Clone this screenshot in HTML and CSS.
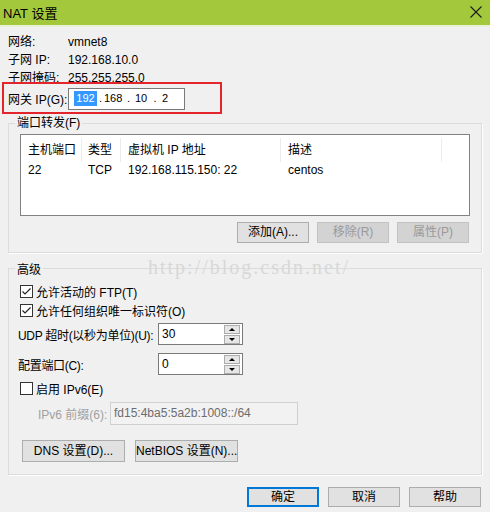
FILE: index.html
```html
<!DOCTYPE html>
<html lang="zh-CN">
<head>
<meta charset="utf-8">
<title>NAT 设置</title>
<link rel="stylesheet" href="styles.css">
</head>
<body>
<div class="titlebar">
  <span class="title">NAT 设置</span>
  <svg class="close" width="12" height="12" viewBox="0 0 12 12"><path d="M0.5 0.5L11.5 11.5M11.5 0.5L0.5 11.5" stroke="#1a1a1a" stroke-width="1.1" fill="none"/></svg>
</div>
<div class="content">
  <div class="info-row"><span class="lbl">网络:</span><span>vmnet8</span></div>
  <div class="info-row"><span class="lbl">子网 IP:</span><span>192.168.10.0</span></div>
  <div class="info-row"><span class="lbl">子网掩码:</span><span>255.255.255.0</span></div>

  <div class="gateway">
    <span class="lbl">网关 IP(G):</span>
    <div class="ipbox">
      <span class="seg s1 sel">192</span><span class="dot d1">.</span><span class="seg s2">168</span><span class="dot d2">.</span><span class="seg s3">10</span><span class="dot d3">.</span><span class="seg s4">2</span>
    </div>
  </div>

  <fieldset class="group g1">
    <legend>端口转发(F)</legend>
    <div class="listbox">
      <div class="lrow head">
        <span class="c1">主机端口</span><span class="c2">类型</span><span class="c3">虚拟机 IP 地址</span><span class="c4">描述</span>
      </div>
      <div class="lrow data">
        <span class="c1">22</span><span class="c2">TCP</span><span class="c3">192.168.115.150: 22</span><span class="c4">centos</span>
      </div>
    </div>
    <div class="btnrow">
      <button class="btn">添加(A)...</button>
      <button class="btn disabled">移除(R)</button>
      <button class="btn disabled">属性(P)</button>
    </div>
  </fieldset>

  <fieldset class="group g2">
    <legend>高级</legend>
    <div class="cbrow r1"><span class="cb"><svg width="11" height="11" viewBox="0 0 11 11"><path d="M1.5 5.5L4 8L9.5 2.5" stroke="#222" stroke-width="1.2" fill="none"/></svg></span>允许活动的 FTP(T)</div>
    <div class="cbrow"><span class="cb"><svg width="11" height="11" viewBox="0 0 11 11"><path d="M1.5 5.5L4 8L9.5 2.5" stroke="#222" stroke-width="1.2" fill="none"/></svg></span>允许任何组织唯一标识符(O)</div>
    <div class="frow udp">
      <span class="flbl">UDP 超时(以秒为单位)(U):</span>
      <div class="spin"><span class="sval">30</span><span class="sbtns"><span class="sb"><i class="up"></i></span><span class="sb"><i class="down"></i></span></span></div>
    </div>
    <div class="frow cfg">
      <span class="flbl">配置端口(C):</span>
      <div class="spin"><span class="sval">0</span><span class="sbtns"><span class="sb"><i class="up"></i></span><span class="sb"><i class="down"></i></span></span></div>
    </div>
    <div class="cbrow r3"><span class="cb"></span>启用 IPv6(E)</div>
    <div class="prow">
      <span class="plbl">IPv6 前缀(6):</span>
      <div class="pbox">fd15:4ba5:5a2b:1008::/64</div>
    </div>
    <div class="drow">
      <button class="btn dns">DNS 设置(D)...</button>
      <button class="btn nb">NetBIOS 设置(N)...</button>
    </div>
  </fieldset>

  <div class="footer">
    <button class="btn ok">确定</button>
    <button class="btn">取消</button>
    <button class="btn">帮助</button>
  </div>
</div>
<div class="watermark">http://blog.csdn.net/</div>
</body>
</html>
```
FILE: styles.css
```css
* { box-sizing: border-box; }
html, body { margin: 0; padding: 0; }
body {
  width: 490px;
  height: 512px;
  background: #f0f0f0;
  font-family: "Liberation Sans", "Noto Sans CJK SC", sans-serif;
  font-size: 12px;
  color: #000;
  position: relative;
  overflow: hidden;
}
.titlebar {
  height: 27px;
  background: #a4c83c;
  border-bottom: 2px solid #eaf1d4;
  display: flex;
  align-items: center;
  justify-content: space-between;
  padding: 0 8px 1px 3px;
}
.title { font-size: 13px; }
.close { display: block; }

.content { padding: 6px 8px 0 8px; }
.info-row { height: 18px; line-height: 18px; display: flex; }
.lbl { width: 60px; flex: none; white-space: nowrap; }

.gateway {
  margin: -5px 0 0 -6px;
  width: 220px;
  height: 32px;
  border: 2px solid #e3242b;
  display: flex;
  align-items: center;
  padding: 1px 0 0 4px;
  position: relative;
}
.ipbox {
  width: 117px;
  height: 22px;
  border: 1px solid #7a7a7a;
  background: #fff;
  display: flex;
  align-items: center;
  font-size: 11px;
}
.seg, .dot { display: inline-block; height: 15px; line-height: 15px; }
.s1 { margin-left: 5px; width: 23px; text-align: center; }
.sel { background: #3399ff; color: #fff; }
.d1 { width: 7px; text-align: center; }
.s2 { width: 22px; }
.d2 { width: 5px; text-align: center; }
.s3 { width: 21px; padding-left: 4px; }
.d3 { width: 6px; text-align: center; }
.s4 { padding-left: 4px; }

.group {
  margin: 2px 0 0 0;
  border: 1px solid #dcdcdc;
  box-shadow: 1px 1px 0 #fff;
  padding: 0 11px 9px 11px;
  min-width: 0;
}
.group legend {
  padding: 0 2px;
  margin-left: -5px;
  line-height: 14px;
  font-size: 12px;
}
.g2 { margin-top: 6px; padding-bottom: 12px; }
.g2 legend { padding-top: 4px; }

.listbox {
  margin-top: 4px;
  height: 82px;
  border: 1px solid #828282;
  background: #fff;
}
.lrow { display: flex; }
.lrow span { padding-left: 7px; white-space: nowrap; }
.head { margin-top: 3px; height: 24px; line-height: 24px; }
.head span { border-right: 1px solid #ececec; }
.data { height: 16px; line-height: 16px; }
.c1 { width: 61px; }
.c2 { width: 39px; padding-left: 6px !important; }
.c3 { width: 160px; }
.c4 { width: 161px; }

.btnrow {
  margin-top: 6px;
  display: flex;
  justify-content: flex-end;
  gap: 8px;
  padding-right: 1px;
}
.btn {
  font-family: "Liberation Sans", "Noto Sans CJK SC", sans-serif;
  font-size: 12px;
  color: #000;
  background: #e1e1e1;
  border: 1px solid #adadad;
  width: 72px;
  height: 21px;
  padding: 0;
  margin: 0;
  line-height: 19px;
  white-space: nowrap;
}
.btn.disabled { background: #d3d3d3; border-color: #c2c2c2; color: #9a9a9a; }

.cbrow { height: 19px; display: flex; align-items: center; white-space: nowrap; }
.r1 { margin-top: 5px; }
.r3 { margin-top: 4px; }
.cb {
  width: 13px;
  height: 13px;
  border: 1px solid #333;
  background: #fff;
  margin-right: 3px;
  display: flex;
  align-items: center;
  justify-content: center;
  flex: none;
}
.cb svg { display: block; }

.frow { height: 22px; display: flex; align-items: center; }
.udp { margin-top: 3px; }
.cfg { margin-top: 8px; }
.flbl { width: 140px; margin-left: -2px; flex: none; white-space: nowrap; letter-spacing: -0.3px; }
.spin {
  width: 85px;
  height: 22px;
  border: 1px solid #7a7a7a;
  background: #fff;
  display: flex;
  align-items: center;
  padding: 0 1px 0 3px;
}
.sval { flex: 1; }
.sbtns { display: flex; flex-direction: column; gap: 1px; margin-right: 1px; }
.sb {
  width: 16px;
  height: 9px;
  border: 1px solid #acacac;
  background: #e6e6e6;
  display: flex;
  align-items: center;
  justify-content: center;
}
.sb i { width: 0; height: 0; border-left: 3px solid transparent; border-right: 3px solid transparent; }
.sb .up { border-bottom: 3px solid #000; }
.sb .down { border-top: 3px solid #000; }

.prow { margin-top: 4px; height: 23px; display: flex; align-items: center; }
.plbl { width: 90px; padding-left: 18px; color: #a0a0a0; flex: none; white-space: nowrap; }
.pbox {
  width: 188px;
  height: 23px;
  border: 1px solid #d0d0d0;
  background: #f2f2f2;
  color: #6d6d6d;
  line-height: 21px;
  padding-left: 3px;
}

.drow { margin-top: 15px; display: flex; }
.drow .btn { height: 22px; width: 103px; }
.dns { margin-left: 2px !important; }
.nb { margin-left: 10px !important; }

.footer {
  margin-top: 12px;
  display: flex;
  justify-content: flex-end;
  gap: 9px;
  padding-right: 1px;
}
.footer .btn { height: 20px; line-height: 18px; }
.btn.ok { border-color: #0078d7; box-shadow: inset 0 0 0 1px #0078d7; }

.watermark {
  position: absolute;
  left: 148px;
  top: 256px;
  font-family: "Liberation Serif", serif;
  font-size: 20px;
  letter-spacing: 2px;
  color: #d8d8d8;
  pointer-events: none;
}
```
